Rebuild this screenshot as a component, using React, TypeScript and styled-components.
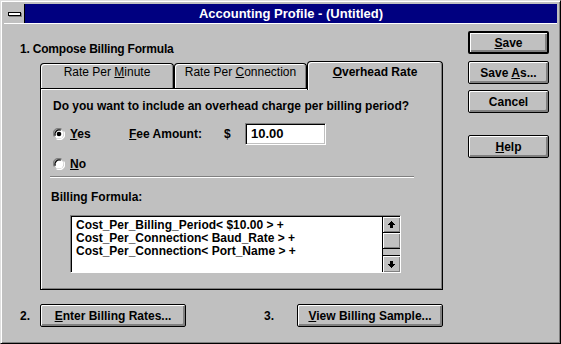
import React from 'react';
import styled, { createGlobalStyle } from 'styled-components';

const GlobalStyle = createGlobalStyle`
  html, body {
    margin: 0;
    padding: 0;
    background: #c0c0c0;
  }
  body {
    font-family: "Liberation Sans", Arial, sans-serif;
    font-size: 12px;
    color: #000;
  }
`;

const Window = styled.div`
  box-sizing: border-box;
  width: 561px;
  height: 344px;
  background: #c0c0c0;
  border: 1px solid;
  border-color: #dfdfdf #000 #000 #dfdfdf;
  box-shadow: inset 1px 1px #fff, inset -1px -1px #808080;
  padding: 3px;
  display: flex;
  flex-direction: column;
`;

const TitleBar = styled.div`
  display: flex;
  height: 19px;
  border-bottom: 1px solid #fff;
`;

const SysMenu = styled.div`
  box-sizing: border-box;
  width: 21px;
  height: 19px;
  border-right: 1px solid #000;
  background: #c0c0c0;
  display: flex;
  align-items: center;
  justify-content: center;
`;

const SysBar = styled.div`
  box-sizing: border-box;
  width: 13px;
  height: 4px;
  border: 1px solid #000;
  background: #fff;
  box-shadow: 1px 1px #808080;
`;

const Caption = styled.div`
  flex: 1;
  background: #000080;
  color: #fff;
  font-weight: bold;
  font-size: 13px;
  line-height: 19px;
  text-align: center;
`;

const Client = styled.div`
  flex: 1;
  display: flex;
`;

const LeftCol = styled.div`
  padding-left: 16px;
  display: flex;
  flex-direction: column;
`;

const RightCol = styled.div`
  margin-left: auto;
  margin-right: 8px;
  padding-top: 7px;
  display: flex;
  flex-direction: column;
`;

const Heading = styled.div`
  font-weight: bold;
  line-height: 14px;
  margin-top: 18px;
  letter-spacing: -0.2px;
`;

const TabControl = styled.div`
  margin-left: 20px;
  margin-top: 5px;
  width: 403px;
`;

const TabRow = styled.div`
  display: flex;
  align-items: flex-end;
  height: 27px;
`;

const Tab = styled.div<{ $active?: boolean; $w: number }>`
  box-sizing: border-box;
  width: ${p => p.$w}px;
  height: ${p => (p.$active ? 29 : 25)}px;
  margin-bottom: ${p => (p.$active ? -2 : 0)}px;
  position: relative;
  z-index: ${p => (p.$active ? 1 : 0)};
  border: 1px solid #000;
  border-bottom: none;
  border-radius: 4px 4px 0 0;
  background: #c0c0c0;
  box-shadow: inset 1px 1px #fff, inset -1px 0 #808080;
  padding-top: ${p => (p.$active ? 3 : 1)}px;
  line-height: 14px;
  text-align: center;
  font-weight: ${p => (p.$active ? 'bold' : 'normal')};
`;

const Panel = styled.div`
  box-sizing: border-box;
  height: 202px;
  border: 1px solid #000;
  box-shadow: inset 1px 1px #fff, inset -1px -1px #808080;
  padding: 10px 12px 0;
  display: flex;
  flex-direction: column;
  font-weight: bold;
`;

const Line = styled.div`
  line-height: 14px;
`;

const OptionRow = styled.div<{ $h: number; $mt: number }>`
  display: flex;
  align-items: center;
  height: ${p => p.$h}px;
  margin-top: ${p => p.$mt}px;
`;

const RadioMark = styled.svg`
  width: 12px;
  height: 12px;
  margin-right: 5px;
  flex: none;
`;

const Label = styled.span<{ $w?: number }>`
  display: inline-block;
  width: ${p => (p.$w ? `${p.$w}px` : 'auto')};
  line-height: 14px;
`;

const EditBox = styled.div`
  box-sizing: border-box;
  width: 81px;
  height: 22px;
  border: 1px solid;
  border-color: #808080 #fff #fff #808080;
  box-shadow: inset 1px 1px #000, inset -1px -1px #c0c0c0;
  background: #fff;
  padding: 3px 5px 0;
  line-height: 14px;
  font-size: 13px;
`;

const Separator = styled.div`
  width: 364px;
  margin: 5px 0 0 -3px;
  border-top: 1px solid #808080;
  border-bottom: 1px solid #fff;
`;

const SubLabel = styled.div`
  line-height: 14px;
  margin: 12px 0 0 -2px;
`;

const ListBox = styled.div`
  box-sizing: border-box;
  display: flex;
  width: 331px;
  height: 58px;
  margin: 11px 0 0 17px;
  border: 1px solid;
  border-color: #808080 #fff #fff #808080;
  box-shadow: inset 1px 1px #000;
  background: #fff;
`;

const ListText = styled.div`
  flex: 1;
  padding: 3px 5px 0;
  line-height: 13px;
  white-space: pre;
`;

const ScrollBar = styled.div`
  box-sizing: border-box;
  width: 18px;
  margin-top: 1px;
  border-left: 1px solid #000;
  display: flex;
  flex-direction: column;
  background: #c0c0c0;
`;

const ScrollPart = styled.div<{ $grow?: boolean }>`
  box-sizing: border-box;
  height: ${p => (p.$grow ? 'auto' : '16px')};
  flex: ${p => (p.$grow ? 1 : 'none')};
  border-bottom: 1px solid #000;
  box-shadow: ${p => (p.$grow ? 'none' : 'inset 1px 1px #fff, inset -1px -1px #808080')};
  display: flex;
  align-items: center;
  justify-content: center;
  &:last-child {
    border-bottom: none;
  }
`;

const BottomRow = styled.div`
  display: flex;
  align-items: center;
  margin-top: 14px;
  font-weight: bold;
`;

const Num = styled.span<{ $w: number; $ml?: number }>`
  display: inline-block;
  width: ${p => p.$w}px;
  margin-left: ${p => p.$ml ?? 0}px;
  line-height: 14px;
`;

const PushButton = styled.button<{ $w: number; $default?: boolean; $mt?: number }>`
  box-sizing: border-box;
  width: ${p => p.$w}px;
  height: 23px;
  margin-top: ${p => p.$mt ?? 0}px;
  padding: 0;
  border: ${p => (p.$default ? 2 : 1)}px solid #000;
  border-radius: 2px;
  background: #c0c0c0;
  box-shadow: inset 1px 1px #fff, inset -2px -2px #808080;
  font-family: "Liberation Sans", Arial, sans-serif;
  font-size: 12px;
  font-weight: bold;
  color: #000;
  line-height: 14px;
  text-align: center;
`;

function Radio({ checked }: { checked?: boolean }) {
  return (
    <RadioMark viewBox="0 0 12 12">
      <circle cx="6" cy="6" r="5.5" fill="#c0c0c0" />
      <circle cx="6" cy="6" r="4.5" fill="#fff" />
      <path d="M1.3 8.5 A5.2 5.2 0 0 1 8.5 1.3" stroke="#808080" strokeWidth="1.2" fill="none" />
      <path d="M2.3 7.8 A4.2 4.2 0 0 1 7.8 2.3" stroke="#000" strokeWidth="1.2" fill="none" />
      <path d="M3.5 10.7 A5.2 5.2 0 0 0 10.7 3.5" stroke="#fff" strokeWidth="1.2" fill="none" />
      {checked && <circle cx="6" cy="6" r="2.3" fill="#000" />}
    </RadioMark>
  );
}

function Arrow({ down }: { down?: boolean }) {
  return (
    <svg width="7" height="7" viewBox="0 0 7 7" style={down ? { transform: 'rotate(180deg)' } : undefined}>
      <path d="M3 0h1v1h1v1h1v1h1v1H5v3H2V4H0V3h1V2h1V1h1z" fill="#000" />
    </svg>
  );
}

export default function App() {
  return (
    <>
      <GlobalStyle />
      <Window>
        <TitleBar>
          <SysMenu>
            <SysBar />
          </SysMenu>
          <Caption>Accounting Profile - (Untitled)</Caption>
        </TitleBar>
        <Client>
          <LeftCol>
            <Heading>1. Compose Billing Formula</Heading>
            <TabControl>
              <TabRow>
                <Tab $w={134}>Rate Per <u>M</u>inute</Tab>
                <Tab $w={133}>Rate Per <u>C</u>onnection</Tab>
                <Tab $w={136} $active><u>O</u>verhead Rate</Tab>
              </TabRow>
              <Panel>
                <Line>Do you want to include an overhead charge per billing period?</Line>
                <OptionRow $h={22} $mt={10}>
                  <Radio checked />
                  <Label $w={59}><u>Y</u>es</Label>
                  <Label $w={95}><u>F</u>ee Amount:</Label>
                  <Label $w={21}>$</Label>
                  <EditBox>10.00</EditBox>
                </OptionRow>
                <OptionRow $h={14} $mt={12}>
                  <Radio />
                  <Label><u>N</u>o</Label>
                </OptionRow>
                <Separator />
                <SubLabel>Billing Formula:</SubLabel>
                <ListBox>
                  <ListText>
                    {'Cost_Per_Billing_Period< $10.00 > +\nCost_Per_Connection< Baud_Rate > +\nCost_Per_Connection< Port_Name > +'}
                  </ListText>
                  <ScrollBar>
                    <ScrollPart><Arrow /></ScrollPart>
                    <ScrollPart />
                    <ScrollPart $grow />
                    <ScrollPart><Arrow down /></ScrollPart>
                  </ScrollBar>
                </ListBox>
              </Panel>
            </TabControl>
            <BottomRow>
              <Num $w={20}>2.</Num>
              <PushButton $w={146}><u>E</u>nter Billing Rates...</PushButton>
              <Num $w={33} $ml={78}>3.</Num>
              <PushButton $w={146}><u>V</u>iew Billing Sample...</PushButton>
            </BottomRow>
          </LeftCol>
          <RightCol>
            <PushButton $w={81} $default><u>S</u>ave</PushButton>
            <PushButton $w={81} $mt={7}>Save <u>A</u>s...</PushButton>
            <PushButton $w={81} $mt={6}>Cancel</PushButton>
            <PushButton $w={81} $mt={22}><u>H</u>elp</PushButton>
          </RightCol>
        </Client>
      </Window>
    </>
  );
}
